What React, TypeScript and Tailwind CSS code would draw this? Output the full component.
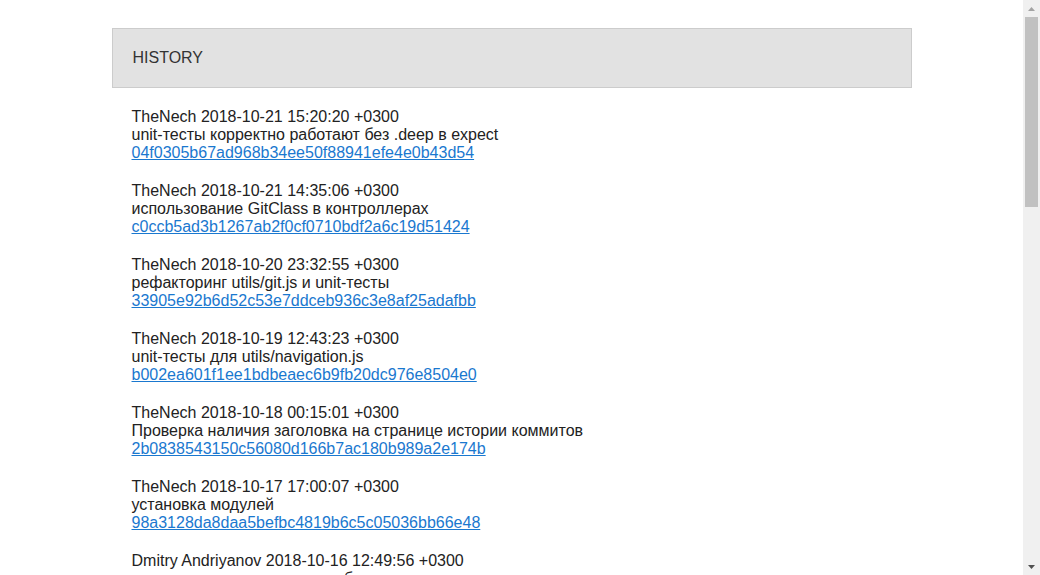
import React from "react";

const commits = [
  ["TheNech", "2018-10-21 15:20:20 +0300", "unit-тесты корректно работают без .deep в expect", "04f0305b67ad968b34ee50f88941efe4e0b43d54"],
  ["TheNech", "2018-10-21 14:35:06 +0300", "использование GitClass в контроллерах", "c0ccb5ad3b1267ab2f0cf0710bdf2a6c19d51424"],
  ["TheNech", "2018-10-20 23:32:55 +0300", "рефакторинг utils/git.js и unit-тесты", "33905e92b6d52c53e7ddceb936c3e8af25adafbb"],
  ["TheNech", "2018-10-19 12:43:23 +0300", "unit-тесты для utils/navigation.js", "b002ea601f1ee1bdbeaec6b9fb20dc976e8504e0"],
  ["TheNech", "2018-10-18 00:15:01 +0300", "Проверка наличия заголовка на странице истории коммитов", "2b0838543150c56080d166b7ac180b989a2e174b"],
  ["TheNech", "2018-10-17 17:00:07 +0300", "установка модулей", "98a3128da8daa5befbc4819b6c5c05036bb66e48"],
  ["Dmitry Andriyanov", "2018-10-16 12:49:56 +0300", "исправления в роутере и шаблонах", "5e1c2f4a8d7b9031c6e2a4f58b7d90c13e6a2f41"],
];

export default function App() {
  return (
    <div
      className="h-screen flex overflow-hidden bg-white"
      style={{ fontFamily: '"Liberation Sans", Arial, sans-serif' }}
    >
      <div className="flex-1 overflow-hidden">
        <div className="w-[800px] mx-auto pt-[28px] pb-[20px]">
          <div className="h-[60px] border border-[#cccccc] bg-[#e2e2e2] flex items-center px-5 text-[16px] text-[#333333]">
            HISTORY
          </div>
          <div className="pl-5 pt-5">
            {commits.map(([author, date, msg, hash]) => (
              <div key={hash} className="mb-5 text-[16px] leading-[18px] text-[#222222]">
                <div>
                  {author} {date}
                </div>
                <div>{msg}</div>
                <a href="#" className="text-[#1a78cf] underline">
                  {hash}
                </a>
              </div>
            ))}
          </div>
        </div>
      </div>
      <div className="w-[17px] shrink-0 bg-[#f0f0f0] flex flex-col">
        <div className="h-[17px] flex items-center justify-center">
          <svg width="7" height="4" viewBox="0 0 7 4">
            <polygon points="3.5,0 7,4 0,4" fill="#a3a3a3" />
          </svg>
        </div>
        <div className="flex-1 px-[2px]">
          <div className="h-[190px] bg-[#c1c1c1]" />
        </div>
        <div className="h-[17px] flex items-center justify-center">
          <svg width="7" height="4" viewBox="0 0 7 4">
            <polygon points="0,0 7,0 3.5,4" fill="#505050" />
          </svg>
        </div>
      </div>
    </div>
  );
}
